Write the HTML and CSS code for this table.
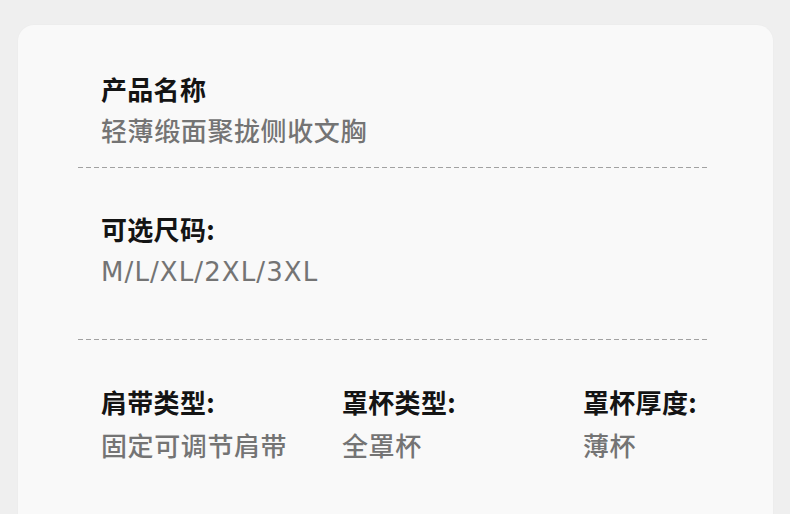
FILE: index.html
```html
<!DOCTYPE html>
<html lang="zh-CN">
<head>
<meta charset="utf-8">
<link rel="stylesheet" href="styles.css">
</head>
<body>
<div class="card">
  <div class="section s1">
    <div class="item">
      <div class="label">产品名称</div>
      <div class="value">轻薄缎面聚拢侧收文胸</div>
    </div>
  </div>
  <div class="divider"></div>
  <div class="section s2">
    <div class="item">
      <div class="label">可选尺码:</div>
      <div class="value latin">M/L/XL/2XL/3XL</div>
    </div>
  </div>
  <div class="divider"></div>
  <div class="section s3">
    <div class="cols">
      <div class="item">
        <div class="label">肩带类型:</div>
        <div class="value">固定可调节肩带</div>
      </div>
      <div class="item">
        <div class="label">罩杯类型:</div>
        <div class="value">全罩杯</div>
      </div>
      <div class="item">
        <div class="label">罩杯厚度:</div>
        <div class="value">薄杯</div>
      </div>
    </div>
  </div>
</div>
</body>
</html>
```

FILE: styles.css
```css
html, body {
  margin: 0;
  padding: 0;
}
body {
  background: #efefef;
  width: 790px;
  height: 514px;
  overflow: hidden;
  font-family: "Noto Sans CJK SC", "Noto Sans", sans-serif;
}
.card {
  margin: 25px 17px 0 18px;
  height: 560px;
  background: #f9f9f9;
  border-radius: 16px;
  box-shadow: 0 0 2px rgba(0,0,0,0.03);
}
.section {
  padding-left: 83px;
}
.s1 { padding-top: 44px; padding-bottom: 17px; }
.s2 { padding-top: 41px; padding-bottom: 47px; }
.s3 { padding-top: 42px; }
.label {
  font-size: 26px;
  line-height: 40px;
  font-weight: 700;
  color: #141414;
  letter-spacing: 0.3px;
}
.value {
  margin-top: 1px;
  font-size: 26px;
  line-height: 40px;
  font-weight: 500;
  color: #747474;
  letter-spacing: 0.6px;
}
.s3 .value {
  margin-top: 3px;
}
.value.latin {
  margin-top: 3px;
  font-family: "DejaVu Sans", sans-serif;
  font-weight: 400;
  font-size: 26px;
  letter-spacing: 1.1px;
}
.divider {
  margin-left: 60px;
  width: 630px;
  height: 1px;
  background-image: repeating-linear-gradient(to right, #a2a2a2 0 5px, transparent 5px 8px);
}
.cols {
  display: grid;
  grid-template-columns: 241px 241px 241px;
}
```
